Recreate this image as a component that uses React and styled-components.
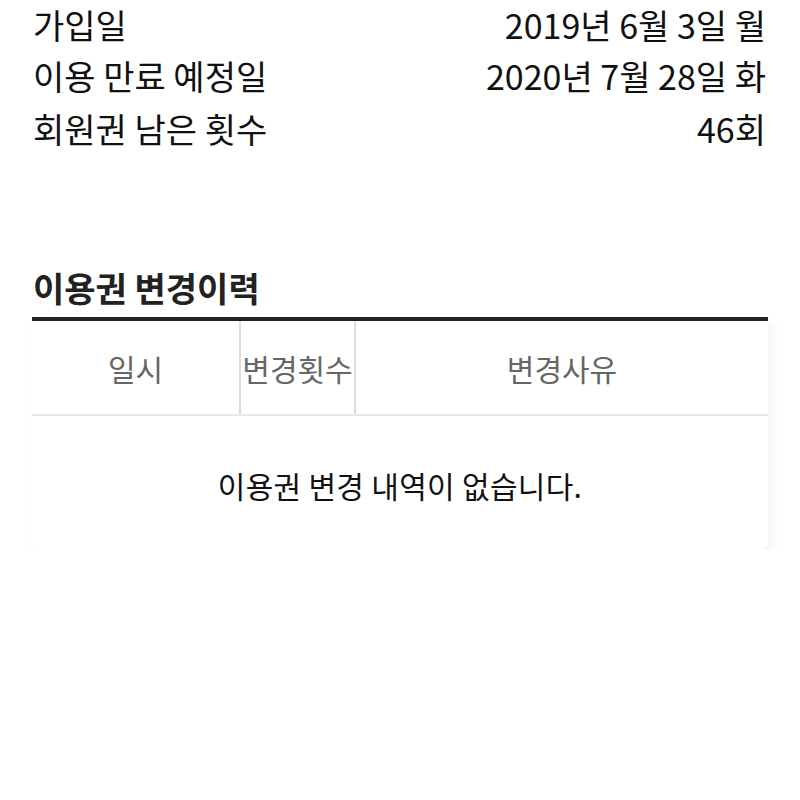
import styled, { createGlobalStyle } from "styled-components";

const GlobalStyle = createGlobalStyle`
  html, body {
    margin: 0;
    padding: 0;
    background: #fff;
  }
  body {
    font-family: "Noto Sans CJK KR", "Noto Sans", sans-serif;
    color: #111;
  }
`;

const Page = styled.div`
  padding: 0 32px;
`;

const InfoList = styled.dl`
  margin: 0;
  padding: 0;
`;

const InfoRow = styled.div`
  display: flex;
  justify-content: space-between;
  align-items: center;
  height: ${(p) => (p.first ? "49px" : "53px")};
  font-size: 34px;
  line-height: ${(p) => (p.first ? "47px" : "53px")};
  color: #111;
`;

const Label = styled.dt`
  margin: 0;
  padding-left: 1px;
`;

const Value = styled.dd`
  margin: 0;
  padding-right: 2px;
`;

const Title = styled.h2`
  margin: 113px 0 0;
  font-size: 34px;
  font-weight: 700;
  line-height: 40px;
  height: 49px;
  color: #222;
  padding-left: 1px;
`;

const Card = styled.div`
  border-top: 4px solid #222;
  background: #fff;
  border-radius: 0 0 8px 8px;
  box-shadow: 4px 6px 12px rgba(0, 0, 0, 0.05);
`;

const HeadRow = styled.div`
  display: grid;
  grid-template-columns: 207px 115px 1fr;
  height: 93px;
  border-bottom: 2px solid #e8e8e8;
`;

const HeadCell = styled.div`
  display: flex;
  align-items: center;
  justify-content: center;
  font-size: 30px;
  color: #666;
  border-left: ${(p) => (p.divided ? "2px solid #ddd" : "none")};
  white-space: nowrap;
`;

const EmptyRow = styled.div`
  height: 134px;
  display: flex;
  align-items: center;
  justify-content: center;
  font-size: 30px;
  letter-spacing: 0.3px;
  color: #111;
  padding-top: 3px;
  box-sizing: border-box;
`;

const info = [
  ["가입일", "2019년 6월 3일 월"],
  ["이용 만료 예정일", "2020년 7월 28일 화"],
  ["회원권 남은 횟수", "46회"],
];

export default function App() {
  return (
    <>
      <GlobalStyle />
      <Page>
        <InfoList>
          {info.map(([k, v], i) => (
            <InfoRow key={k} first={i === 0}>
              <Label>{k}</Label>
              <Value>{v}</Value>
            </InfoRow>
          ))}
        </InfoList>
        <Title>이용권 변경이력</Title>
        <Card>
          <HeadRow>
            <HeadCell>일시</HeadCell>
            <HeadCell divided>변경횟수</HeadCell>
            <HeadCell divided>변경사유</HeadCell>
          </HeadRow>
          <EmptyRow>이용권 변경 내역이 없습니다.</EmptyRow>
        </Card>
      </Page>
    </>
  );
}
